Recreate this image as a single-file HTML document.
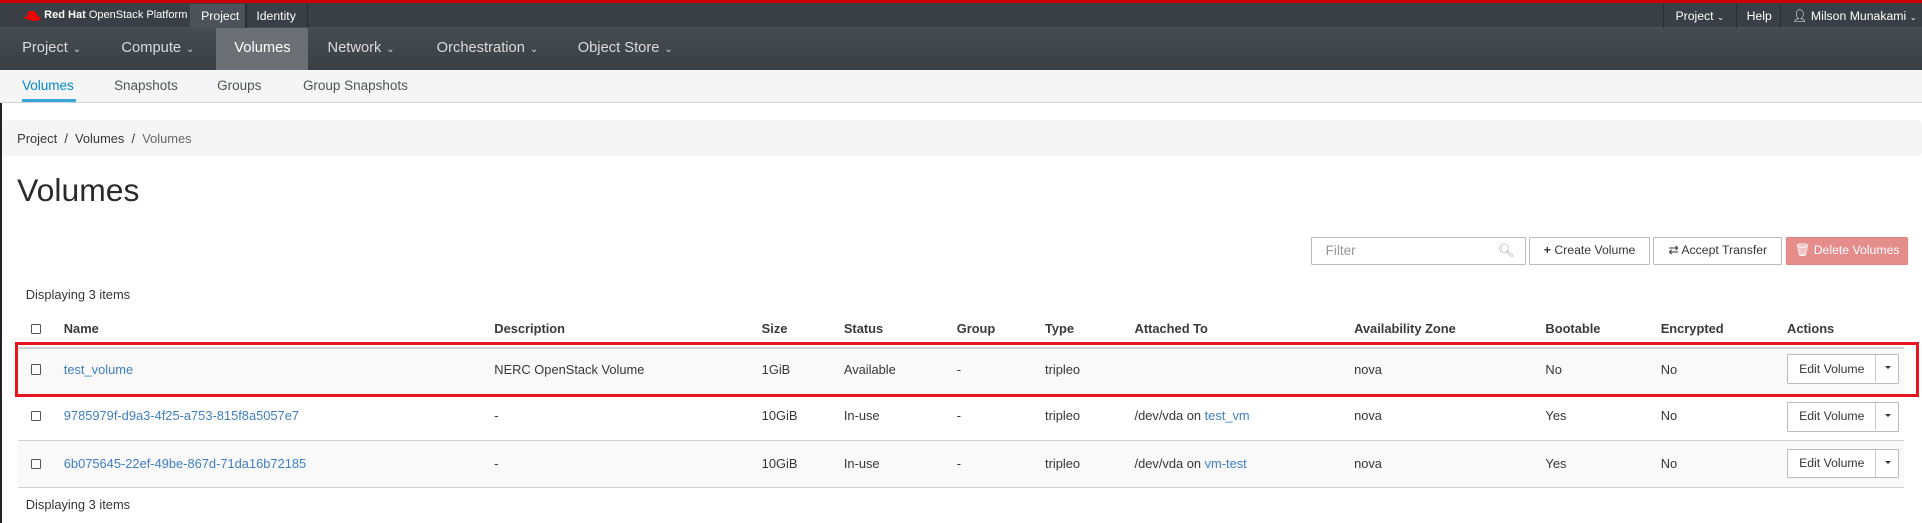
<!DOCTYPE html>
<html><head><meta charset="utf-8"><style>
html,body{margin:0;padding:0;width:1922px;height:523px;overflow:hidden;background:#fff}
#w{zoom:1.22653;width:1567px;height:427px;position:relative;font-family:"Liberation Sans",Arial,sans-serif;font-size:10.5px;color:#363636}
.a{position:absolute;white-space:nowrap}
.top{position:absolute;left:0;top:0;width:1567px;height:23px;background:#393f44;border-top:3px solid #cc0000;box-sizing:border-box;border-bottom:1px solid #4d5258}
.nav{position:absolute;left:0;top:23px;width:1567px;height:34px;background:linear-gradient(#474c50,#393f44)}
.nav .a{color:#dbdbdb;font-size:12px;top:10px}
.sub{position:absolute;left:0;top:57px;width:1567px;height:27px;background:#f5f5f5;border-bottom:1px solid #d1d1d1;box-sizing:border-box}
.sub .a{font-size:11px;top:7px;color:#4d5258}
.car{font-size:8px;margin-left:4px}
.btn{position:absolute;top:193px;height:23px;border:1px solid #bbb;border-radius:1px;box-sizing:border-box;background:#fff;font-size:10px;line-height:21px;text-align:center;color:#363636}
.th{top:262px;font-weight:bold;color:#3a3a3a}
.row{position:absolute;left:15px;width:1537px;height:38px;border-top:1px solid #d1d1d1;box-sizing:border-box}
.lk{color:#3f7fc4}
.cb{position:absolute;width:7px;height:7px;border:1px solid #555;border-radius:1px;left:25px}
.ev{position:absolute;left:1457px;width:91px;height:24px;border:1px solid #bbb;border-radius:1px;box-sizing:border-box;background:#fff;font-size:10px}
.ev span{position:absolute;left:9px;top:5px}
.ev i{position:absolute;left:71px;top:0;width:1px;height:22px;background:#ccc}
.ev b{position:absolute;left:79px;top:9px;border:3px solid transparent;border-top:3px solid #333;border-bottom:0}
</style></head><body><div id="w">
<div class="top"></div>
<svg class="a" style="left:19px;top:8px" width="15" height="10" viewBox="0 0 15 10"><path d="M3 6 L4 2 Q5 0 8 1 L10 1 Q11 3 12 5 Q15 6 14 8 Q10 10 5 8 Q0 7 1 5 Z" fill="#e00"/></svg>
<div class="a" style="left:36px;top:7px;color:#fff;font-size:9px"><b>Red Hat</b> OpenStack Platform</div>
<div class="a" style="left:155px;top:3px;width:45px;height:19px;background:#4d5258"></div>
<div class="a" style="left:164px;top:7px;color:#fff;font-size:10px">Project</div>
<div class="a" style="left:200px;top:3px;width:1px;height:20px;background:#2a2e31"></div>
<div class="a" style="left:209px;top:7px;color:#fff;font-size:10px">Identity</div>
<div class="a" style="left:250px;top:3px;width:1px;height:20px;background:#2a2e31"></div>
<div class="a" style="left:1356px;top:3px;width:1px;height:20px;background:#2a2e31"></div>
<div class="a" style="left:1366px;top:7px;color:#fff;font-size:10px">Project <span style="font-size:7px">&#8964;</span></div>
<div class="a" style="left:1415px;top:3px;width:1px;height:20px;background:#2a2e31"></div>
<div class="a" style="left:1424px;top:7px;color:#fff;font-size:10px">Help</div>
<div class="a" style="left:1451px;top:3px;width:1px;height:20px;background:#2a2e31"></div>
<div class="a" style="left:1461px;top:7px;color:#fff;font-size:10px">&#x1F464;&#xFE0E; Milson Munakami <span style="font-size:7px">&#8964;</span></div>
<div class="nav">
<div class="a" style="left:176px;top:0;width:75px;height:34px;background:#6c7075"></div>
<div class="a" style="left:18px">Project<span class="car">&#8964;</span></div>
<div class="a" style="left:99px">Compute<span class="car">&#8964;</span></div>
<div class="a" style="left:191px;color:#fff">Volumes</div>
<div class="a" style="left:267px">Network<span class="car">&#8964;</span></div>
<div class="a" style="left:356px">Orchestration<span class="car">&#8964;</span></div>
<div class="a" style="left:471px">Object Store<span class="car">&#8964;</span></div>
</div>
<div class="sub">
<div class="a" style="left:18px;color:#0088ce">Volumes</div>
<div class="a" style="left:18px;top:24px;width:44px;height:2px;background:#39a5dc"></div>
<div class="a" style="left:93px">Snapshots</div>
<div class="a" style="left:177px">Groups</div>
<div class="a" style="left:247px">Group Snapshots</div>
</div>
<div class="a" style="left:0;top:84px;width:2px;height:343px;background:#222"></div>
<div class="a" style="left:2px;top:98px;width:1565px;height:29px;background:#f5f5f5;border-radius:3px"></div>
<div class="a" style="left:14px;top:107px;font-size:10.5px">Project &nbsp;/&nbsp; Volumes &nbsp;/&nbsp; <span style="color:#666">Volumes</span></div>
<div class="a" style="left:14px;top:140px;font-size:26px;color:#2b2b2b">Volumes</div>
<div class="btn" style="left:1069px;width:175px;text-align:left;padding-left:11px;color:#999;font-size:11px">Filter<span style="position:absolute;right:8px;color:#aaa">&#x1F50D;&#xFE0E;</span></div>
<div class="btn" style="left:1247px;width:98px"><b>+</b> Create Volume</div>
<div class="btn" style="left:1348px;width:105px">&#8644; Accept Transfer</div>
<div class="btn" style="left:1456px;width:100px;background:#e58d8a;border-color:#e08583;color:#fff">&#x1F5D1;&#xFE0E; Delete Volumes</div>
<div class="a" style="left:21px;top:234px">Displaying 3 items</div>
<div class="cb" style="top:264px"></div>
<div class="a th" style="left:52px">Name</div><div class="a th" style="left:403px">Description</div><div class="a th" style="left:621px">Size</div><div class="a th" style="left:688px">Status</div><div class="a th" style="left:780px">Group</div><div class="a th" style="left:852px">Type</div><div class="a th" style="left:925px">Attached To</div><div class="a th" style="left:1104px">Availability Zone</div><div class="a th" style="left:1260px">Bootable</div><div class="a th" style="left:1354px">Encrypted</div><div class="a th" style="left:1457px">Actions</div>
<div class="row" style="top:283px;background:#f9f9f9;border-top:2px solid #d1d1d1"></div>
<div class="row" style="top:321px"></div>
<div class="row" style="top:359px;background:#f9f9f9"></div>
<div class="row" style="top:397px;height:1px"></div>
<div class="cb" style="top:297px"></div><div class="cb" style="top:335px"></div><div class="cb" style="top:374px"></div>
<div class="a lk" style="left:52px;top:295px">test_volume</div>
<div class="a" style="left:403px;top:295px">NERC OpenStack Volume</div>
<div class="a" style="left:621px;top:295px">1GiB</div><div class="a" style="left:688px;top:295px">Available</div><div class="a" style="left:780px;top:295px">-</div><div class="a" style="left:852px;top:295px">tripleo</div><div class="a" style="left:1104px;top:295px">nova</div><div class="a" style="left:1260px;top:295px">No</div><div class="a" style="left:1354px;top:295px">No</div>
<div class="a lk" style="left:52px;top:333px">9785979f-d9a3-4f25-a753-815f8a5057e7</div>
<div class="a" style="left:403px;top:333px">-</div><div class="a" style="left:621px;top:333px">10GiB</div><div class="a" style="left:688px;top:333px">In-use</div><div class="a" style="left:780px;top:333px">-</div><div class="a" style="left:852px;top:333px">tripleo</div><div class="a" style="left:925px;top:333px">/dev/vda on <span class="lk">test_vm</span></div><div class="a" style="left:1104px;top:333px">nova</div><div class="a" style="left:1260px;top:333px">Yes</div><div class="a" style="left:1354px;top:333px">No</div>
<div class="a lk" style="left:52px;top:372px">6b075645-22ef-49be-867d-71da16b72185</div>
<div class="a" style="left:403px;top:372px">-</div><div class="a" style="left:621px;top:372px">10GiB</div><div class="a" style="left:688px;top:372px">In-use</div><div class="a" style="left:780px;top:372px">-</div><div class="a" style="left:852px;top:372px">tripleo</div><div class="a" style="left:925px;top:372px">/dev/vda on <span class="lk">vm-test</span></div><div class="a" style="left:1104px;top:372px">nova</div><div class="a" style="left:1260px;top:372px">Yes</div><div class="a" style="left:1354px;top:372px">No</div>
<div class="ev" style="top:289px"><span>Edit Volume</span><i></i><b></b></div>
<div class="ev" style="top:328px"><span>Edit Volume</span><i></i><b></b></div>
<div class="ev" style="top:366px"><span>Edit Volume</span><i></i><b></b></div>
<div class="a" style="left:21px;top:405px">Displaying 3 items</div>
<div class="a" style="left:12px;top:279px;width:1548px;height:40px;border:3px solid #e8141e"></div>
</div></body></html>
